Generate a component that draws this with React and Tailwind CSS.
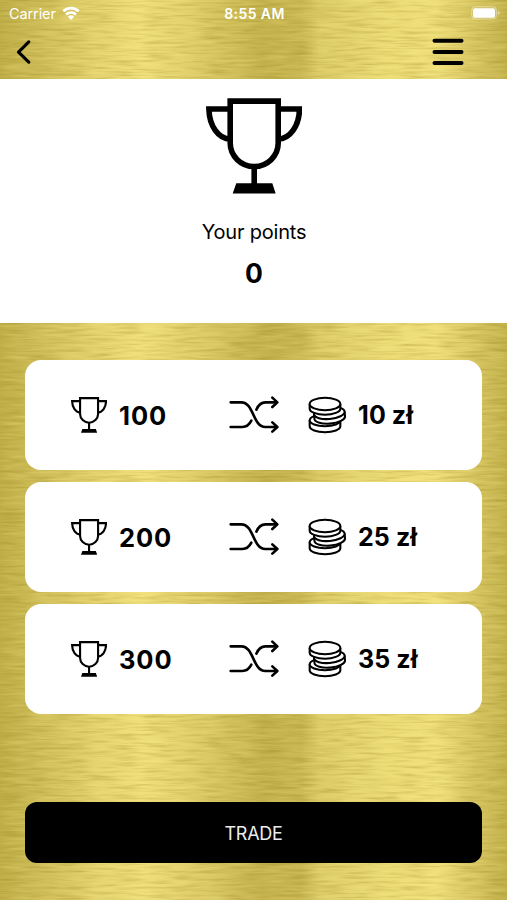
const rewards = [
  { points: 100, cash: '10 zł' },
  { points: 200, cash: '25 zł' },
  { points: 300, cash: '35 zł' },
]

// Brushed gold sheet: a banded gradient with stretched noise on top
function GoldBackground() {
  return (
    <svg className="absolute inset-0 -z-10 h-full w-full" preserveAspectRatio="none" aria-hidden="true">
      <defs>
        <linearGradient id="gold" x1="0" x2="1" y1="0" y2="0">
          <stop offset="0" stopColor="#bfae48" />
          <stop offset="0.08" stopColor="#cfbe59" />
          <stop offset="0.19" stopColor="#e4d36e" />
          <stop offset="0.28" stopColor="#f0e07b" />
          <stop offset="0.4" stopColor="#dccb67" />
          <stop offset="0.52" stopColor="#c2b14c" />
          <stop offset="0.595" stopColor="#c9b853" />
          <stop offset="0.63" stopColor="#dccc68" />
          <stop offset="0.76" stopColor="#ecdc76" />
          <stop offset="0.86" stopColor="#f0e07b" />
          <stop offset="0.92" stopColor="#dccb67" />
          <stop offset="1" stopColor="#c2b14c" />
        </linearGradient>
        <filter id="brush" x="0" y="0" width="100%" height="100%" colorInterpolationFilters="sRGB">
          <feTurbulence type="fractalNoise" baseFrequency="0.035 0.38" numOctaves="3" seed="8" />
          <feColorMatrix values="0 0 0 0 0.55  0 0 0 0 0.47  0 0 0 0 0.08  1.6 0 0 0 -0.68" />
          <feGaussianBlur stdDeviation="2.5 0.3" />
        </filter>
        <filter id="shine" x="0" y="0" width="100%" height="100%" colorInterpolationFilters="sRGB">
          <feTurbulence type="fractalNoise" baseFrequency="0.035 0.32" numOctaves="3" seed="21" />
          <feColorMatrix values="0 0 0 0 1  0 0 0 0 0.95  0 0 0 0 0.55  1.6 0 0 0 -0.68" />
          <feGaussianBlur stdDeviation="2.5 0.3" />
        </filter>
      </defs>
      <rect width="100%" height="100%" fill="url(#gold)" />
      <rect width="100%" height="100%" filter="url(#brush)" opacity="0.42" />
      <rect width="100%" height="100%" filter="url(#shine)" opacity="0.34" />
    </svg>
  )
}

function Trophy({ className }) {
  return (
    <svg viewBox="0 0 96 96" className={className} fill="none" stroke="#000" strokeWidth="5.6">
      <path d="M24.2 3.1h48v42a24 23.4 0 0 1-48 0Z" />
      <path d="M24.2 11H2.9C3.3 28 12.5 41 24.2 41M72.2 11h21.3C93.1 28 83.9 41 72.2 41" />
      <path d="M48.2 68v18" />
      <path d="M30.3 85.2h36l3.4 10.3h-43Z" fill="#000" stroke="none" />
    </svg>
  )
}

function Shuffle() {
  return (
    <svg viewBox="28 33 150 114" className="h-[38px] w-[50px]" fill="none" stroke="#000" strokeWidth="7.8" strokeLinecap="round" strokeLinejoin="round">
      <path d="M33 52h32c38 0 34 74 72 74h34" />
      <path d="M33 126h35c13 0 21-7 27-19M110 74c6-14 13-22 27-22h34" />
      <path d="m158 38 15 14-15 14M158 112l15 14-15 14" />
    </svg>
  )
}

function Coins() {
  return (
    <svg viewBox="267 33 114 114" className="size-[38px]" fill="#fff" stroke="#000" strokeWidth="6.2">
      <path d="M272 106v18c0 9.9 20.6 18 46 18s46-8.1 46-18v-18" />
      <ellipse cx="318" cy="106" rx="46" ry="18" />
      <g transform="rotate(-5 331 84)">
        <path d="M285 84v14c0 9.9 20.6 18 46 18s46-8.1 46-18V84" />
        <ellipse cx="331" cy="84" rx="46" ry="18" />
      </g>
      <path d="M272 57v14c0 9.9 20.6 18 46 18s46-8.1 46-18V57" />
      <ellipse cx="318" cy="57" rx="46" ry="18.5" />
    </svg>
  )
}

function StatusBar() {
  return (
    <div className="grid h-7 grid-cols-3 items-center pl-[9px] pr-[7px] text-white">
      <div className="flex items-center gap-[6px]">
        <span className="text-[14.5px] tracking-[-0.1px]">Carrier</span>
        <svg viewBox="0 0 18 14" className="-mt-[3px] h-[14px] w-[18px]" fill="#fff">
          <path d="M9 14 5.9 10.8a4.5 4.5 0 0 1 6.2 0Z" />
          <path d="M1.3 5.3a11 11 0 0 1 15.4 0M4 8.5a7.2 7.2 0 0 1 10 0" fill="none" stroke="#fff" strokeWidth="2.6" />
        </svg>
      </div>
      <span className="-mt-px text-center text-[14px] font-semibold tracking-[0.4px]">8:55 AM</span>
      <svg viewBox="0 0 29 14" className="-mt-[2px] h-[14px] w-[29px] justify-self-end">
        <rect x="0.8" y="0.8" width="24.5" height="12.2" rx="3.2" fill="none" stroke="#fff" strokeOpacity="0.45" />
        <rect x="2" y="2.2" width="22" height="9.6" rx="1.8" fill="#fff" />
        <path d="M27 5v4q1.5-.7 1.5-2T27 5" fill="#fff" fillOpacity="0.5" />
      </svg>
    </div>
  )
}

function RewardCard({ points, cash }) {
  return (
    <div className="flex h-[110px] items-center rounded-[16px] bg-white pl-[46px] text-[25.5px] font-bold">
      <Trophy className="size-9" />
      <span className="ml-[12px] mt-[2px] w-[110px] tracking-[0.9px]">{points}</span>
      <Shuffle />
      <div className="ml-[29px] flex items-center">
        <Coins />
        <span className="ml-[12px] mt-[2px] text-[25px] tracking-[0.1px]">{cash}</span>
      </div>
    </div>
  )
}

export default function App() {
  return (
    <div className="relative isolate flex h-[900px] w-full flex-col overflow-hidden font-['Inter','Liberation_Sans',sans-serif] text-black">
      <GoldBackground />

      <header className="h-[79px]">
        <StatusBar />
        <div className="flex h-12 items-center justify-between pl-4 pr-[43px]">
          <button aria-label="Back">
            <svg viewBox="0 0 16 26" className="h-[26px] w-4" fill="none" stroke="#000" strokeWidth="3.2" strokeLinecap="round" strokeLinejoin="round">
              <path d="M12.8 2.9 2.5 13.2l10.3 9.9" />
            </svg>
          </button>
          <button aria-label="Menu">
            <svg viewBox="0 0 32 28" className="h-7 w-8" stroke="#000" strokeWidth="4" strokeLinecap="round">
              <path d="M2.5 2.8h27M2.5 13.9h27M2.5 24.9h27" />
            </svg>
          </button>
        </div>
      </header>

      <section className="flex h-[244px] flex-col items-center bg-white pt-[19px]">
        <Trophy className="size-24" />
        <p className="ml-px mt-[24px] text-[20px] leading-[28px] tracking-[-0.2px]">Your points</p>
        <p className="ml-px mt-[11px] text-[26.5px] font-bold leading-[32px]">0</p>
      </section>

      <main className="flex flex-1 flex-col px-[25px] pt-[37px]">
        <div className="flex flex-col gap-3">
          {rewards.map(reward => (
            <RewardCard key={reward.points} {...reward} />
          ))}
        </div>
        <button className="mt-[88px] h-[61px] rounded-xl bg-black pt-px text-[18px] tracking-[-0.3px] text-[#ececec]">
          TRADE
        </button>
      </main>
    </div>
  )
}
